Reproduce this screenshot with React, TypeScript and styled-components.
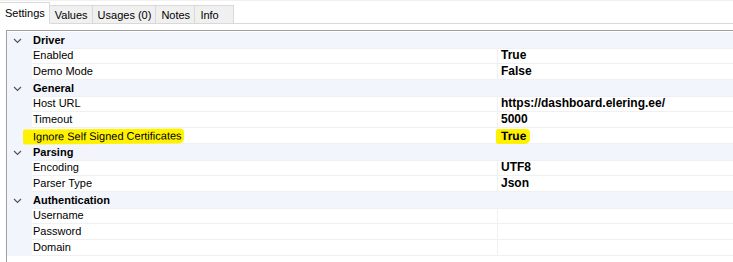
import * as React from "react";
import styled, { createGlobalStyle } from "styled-components";

const GlobalStyle = createGlobalStyle`
  html, body {
    margin: 0;
    padding: 0;
    background: #ffffff;
  }
  body {
    font-family: "Liberation Sans", Arial, sans-serif;
    font-size: 11px;
    color: #000000;
  }
`;

interface IProperty {
  name: string;
  value?: string;
  marked?: boolean;
}

interface ICategory {
  title: string;
  items: IProperty[];
}

const categories: ICategory[] = [
  {
    title: "Driver",
    items: [
      { name: "Enabled", value: "True" },
      { name: "Demo Mode", value: "False" }
    ]
  },
  {
    title: "General",
    items: [
      { name: "Host URL", value: "https://dashboard.elering.ee/" },
      { name: "Timeout", value: "5000" },
      { name: "Ignore Self Signed Certificates", value: "True", marked: true }
    ]
  },
  {
    title: "Parsing",
    items: [
      { name: "Encoding", value: "UTF8" },
      { name: "Parser Type", value: "Json" }
    ]
  },
  {
    title: "Authentication",
    items: [{ name: "Username" }, { name: "Password" }, { name: "Domain" }]
  }
];

const tabs = ["Settings", "Values", "Usages (0)", "Notes", "Info"];

const Page = styled.div`
  width: 733px;
  height: 262px;
  overflow: hidden;
  border-top: 1px solid #f0f0f0;
  box-sizing: border-box;
`;

const TabStrip = styled.div`
  display: flex;
  align-items: flex-end;
  height: 22px;
  border-bottom: 1px solid #d9d9d9;
`;

const Tab = styled.div<{ $active?: boolean }>`
  box-sizing: border-box;
  min-width: 39px;
  height: ${(p) => (p.$active ? "22px" : "18px")};
  margin-bottom: ${(p) => (p.$active ? "-1px" : "0")};
  padding: ${(p) => (p.$active ? "0" : "1px")} 4px 0 5px;
  display: flex;
  align-items: center;
  background: ${(p) => (p.$active ? "#ffffff" : "#f0f0f0")};
  border: 1px solid #d9d9d9;
  border-left: none;
  border-bottom: ${(p) => (p.$active ? "1px solid #ffffff" : "none")};
  font-size: 11px;
`;

const Grid = styled.div`
  margin: 6px 0 0 6px;
  border-top: 1px solid #a0a0a0;
  border-left: 1px solid #a0a0a0;
  padding-top: 1px;
  padding-bottom: 6px;
`;

const Row = styled.div`
  display: grid;
  grid-template-columns: 25px 465px 1fr;
  height: 16px;
`;

const Gutter = styled.div`
  background: #f2f5fb;
  display: flex;
  align-items: center;
  padding-left: 6px;
`;

const CategoryTitle = styled.div`
  grid-column: 2 / 4;
  background: #f2f5fb;
  font-weight: bold;
  line-height: 16px;
  padding-left: 1px;
  border-bottom: 1px solid #eef0f5;
  box-sizing: border-box;
`;

const Label = styled.div`
  position: relative;
  line-height: 15px;
  padding-left: 1px;
  border-bottom: 1px solid #f0f0f0;
  white-space: nowrap;
`;

const Value = styled.div`
  position: relative;
  line-height: 15px;
  padding-left: 3px;
  font-size: 12px;
  font-weight: bold;
  border-left: 1px solid #f0f0f0;
  border-bottom: 1px solid #f0f0f0;
  white-space: nowrap;
`;

const Marker = styled.span<{ $before: number; $after: number }>`
  display: inline-block;
  background: #fff200;
  margin-left: -${(p) => p.$before}px;
  padding-left: ${(p) => p.$before}px;
  padding-right: ${(p) => p.$after}px;
  line-height: 15px;
  border-radius: 2px 4px 5px 2px;
  transform: translateY(1px) rotate(-0.4deg);
`;

const Chevron = () => (
  <svg width="9" height="6" viewBox="0 0 9 6">
    <path d="M1 1 L4.5 4.5 L8 1" fill="none" stroke="#555" strokeWidth="1.2" />
  </svg>
);

const App = () => (
  <Page>
    <GlobalStyle />
    <TabStrip>
      {tabs.map((t, i) => (
        <Tab key={t} $active={i === 0}>
          {t}
        </Tab>
      ))}
    </TabStrip>
    <Grid>
      {categories.map((cat) => (
        <React.Fragment key={cat.title}>
          <Row>
            <Gutter>
              <Chevron />
            </Gutter>
            <CategoryTitle>{cat.title}</CategoryTitle>
          </Row>
          {cat.items.map((item) => (
            <Row key={item.name}>
              <Gutter />
              <Label>
                {item.marked ? (
                  <Marker $before={10} $after={2}>
                    {item.name}
                  </Marker>
                ) : (
                  item.name
                )}
              </Label>
              <Value>
                {item.marked && item.value ? (
                  <Marker $before={5} $after={4}>
                    {item.value}
                  </Marker>
                ) : (
                  item.value
                )}
              </Value>
            </Row>
          ))}
        </React.Fragment>
      ))}
    </Grid>
  </Page>
);

export default App;
